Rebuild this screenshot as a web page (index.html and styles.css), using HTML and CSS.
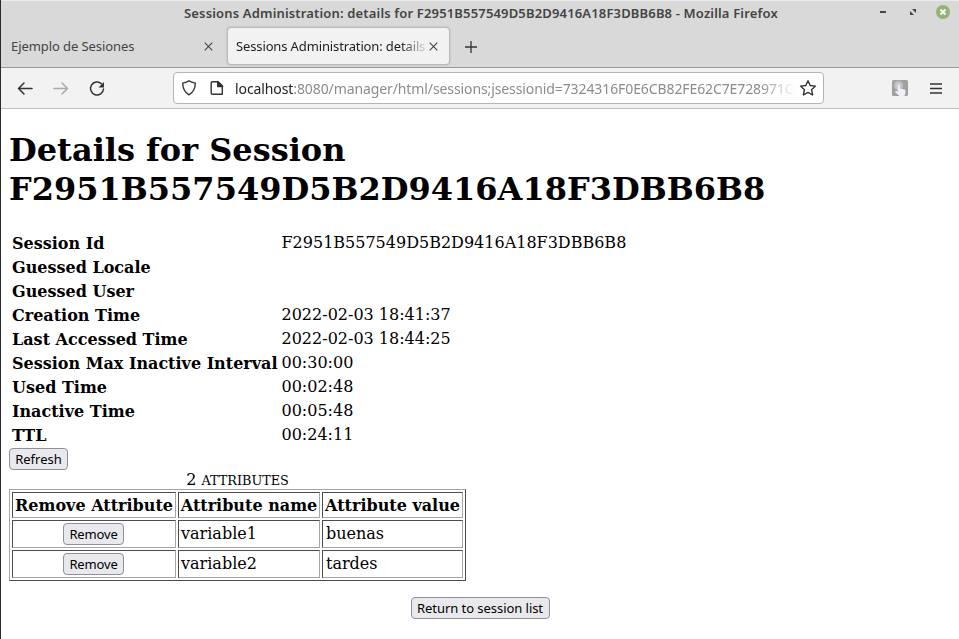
FILE: index.html
```html
<!DOCTYPE html>
<html lang="en">
<head>
<meta charset="utf-8">
<title>Sessions Administration</title>
<link rel="stylesheet" href="styles.css">
</head>
<body>
<div class="window">
  <header class="titlebar">
    <span class="title">Sessions Administration: details for F2951B557549D5B2D9416A18F3DBB6B8 - Mozilla Firefox</span>
    <div class="controls">
      <svg width="84" height="24" viewBox="0 0 84 24">
        <path d="M5 10h6v2H5z" fill="#444"/>
        <path d="M37 8h4v4zM35 10v4h4z" fill="#444"/>
        <circle cx="68" cy="11" r="7" fill="#92b372"/>
        <path d="M65.500 8.500l5 5m0-5l-5 5" stroke="#fff" stroke-width="2"/>
      </svg>
    </div>
  </header>
  <nav class="tabs">
    <div class="tab"><span class="label l1">Ejemplo de Sesiones</span>
      <svg class="close" width="9" height="9" viewBox="0 0 9 9"><path d="M.7.7l7.6 7.6m0-7.6L.7 8.3"/></svg></div>
    <div class="tab active"><span class="label l2">Sessions Administration: details for</span>
      <svg class="close" width="9" height="9" viewBox="0 0 9 9"><path d="M.7.7l7.6 7.6m0-7.6L.7 8.3"/></svg></div>
    <svg class="plus" width="12" height="12" viewBox="0 0 12 12"><path d="M6 0v12M0 6h12"/></svg>
  </nav>
  <div class="toolbar">
    <svg class="nav" width="100" height="40" viewBox="0 0 100 40">
      <path d="M6.500 20.500H20M12 15l-5.500 5.500L12 26" stroke="#333"/>
      <path d="M42 20.500h13.500M50 15l5.500 5.500L50 26" stroke="#aaa"/>
      <path d="M89.500 15.800A6.500 6.500 0 1 0 91.500 21" stroke="#333"/>
      <path d="M92 14v5.500h-5.500z" fill="#333" stroke="none"/>
    </svg>
    <div class="urlbar">
      <svg class="urlicons" width="42" height="18" viewBox="0 0 42 18">
        <path d="M7 1.700C5.500 3 3.200 3.700.7 4.100c0 5.200 1.600 9.100 6.300 11.700 4.700-2.600 6.300-6.500 6.300-11.700C10.800 3.700 8.500 3 7 1.700z"/>
        <path d="M30.200 2.700h5.800l4.300 4.100v8.500H30.200q-1 0-1-1V3.700q0-1 1-1z"/>
        <path d="M35.700 2.500v5h5z" fill="#333"/>
      </svg>
      <span class="url"><b>localhost</b>:8080/manager/html/sessions;jsessionid=7324316F0E6CB82FE62C7E728971CCA2</span>
      <svg class="star" width="18" height="18" viewBox="0 0 18 18"><path d="M9 1.700l2.200 4.800 5.300.6-3.900 3.600 1 5.300L9 13.400 4.400 16l1-5.300-3.900-3.600 5.300-.6z"/></svg>
    </div>
    <svg class="addon" width="16" height="16" viewBox="0 0 16 16">
      <rect width="16" height="16" rx="1.500" fill="#a0a0a0"/>
      <circle cx="6.500" cy="5.500" r="5" fill="#b5b5b5"/><circle cx="6.500" cy="5.500" r="3.500" fill="#c8c8c8"/>
      <path d="M5.800 5q1-1 2 0v3.500l5 1q1 .5.700 3l-1 3.500H7.500L3 12q0-1.500 2.800-.5z" fill="#edf0f8"/>
    </svg>
    <svg class="menu" width="12" height="11" viewBox="0 0 12 11"><path d="M0 1h12M0 5.500h12M0 10h12"/></svg>
  </div>
  <main>
    <h1>Details for Session F2951B557549D5B2D9416A18F3DBB6B8</h1>
    <table class="details">
      <tr><th>Session Id</th><td>F2951B557549D5B2D9416A18F3DBB6B8</td></tr>
      <tr><th>Guessed Locale</th><td></td></tr>
      <tr><th>Guessed User</th><td></td></tr>
      <tr><th>Creation Time</th><td>2022-02-03 18:41:37</td></tr>
      <tr><th>Last Accessed Time</th><td>2022-02-03 18:44:25</td></tr>
      <tr><th>Session Max Inactive Interval</th><td>00:30:00</td></tr>
      <tr><th>Used Time</th><td>00:02:48</td></tr>
      <tr><th>Inactive Time</th><td>00:05:48</td></tr>
      <tr><th>TTL</th><td>00:24:11</td></tr>
    </table>
    <button class="refresh">Refresh</button>
    <table class="attrs">
      <caption>2 <span class="caps">attributes</span></caption>
      <tr><th class="c1">Remove Attribute</th><th class="c2">Attribute name</th><th class="c3">Attribute value</th></tr>
      <tr><td><button class="remove">Remove</button></td><td>variable1</td><td>buenas</td></tr>
      <tr><td><button class="remove">Remove</button></td><td>variable2</td><td>tardes</td></tr>
    </table>
    <button class="return">Return to session list</button>
  </main>
</div>
</body>
</html>
```
FILE: styles.css
```css
* { box-sizing: border-box; }
body { margin: 0; background: #fff; }
svg { display: block; flex: none; }
.window {
  height: 639px;
  overflow: hidden;
  border-left: 1px solid #2b2b2f;
  font-family: "Noto Sans", sans-serif;
}
.titlebar {
  display: flex;
  height: 27px;
  background: #d9d9d9;
  border-top: 1px solid #ececec;
  padding-left: 183px;
}
.title {
  width: 610px;
  font-size: 13px;
  font-weight: 600;
  line-height: 24px;
  color: #444;
  white-space: nowrap;
  letter-spacing: 0.16px;
}
.controls { margin-left: 81px; }
.tabs {
  display: flex;
  height: 41px;
  background: #d9d9d9;
  border-bottom: 1px solid #999;
}
.tab {
  display: flex;
  align-items: center;
  width: 222px;
  height: 38px;
  padding: 0 10px 0 10px;
  font-size: 13px;
  color: #444;
}
.tab.active {
  margin-left: 4px;
  width: 223px;
  padding: 0 11px 0 8px;
  border: 1px solid #b9b9c1;
  border-radius: 4px;
  background: #f2f2f2;
  box-shadow: 0 0 2px #aaaab4;
  color: #222;
}
.label { flex: 1; overflow: hidden; white-space: nowrap; }
.l1 { letter-spacing: -0.08px; }
.l2 {
  letter-spacing: -0.13px;
  -webkit-mask-image: linear-gradient(to left, transparent, #000 28px);
  mask-image: linear-gradient(to left, transparent, #000 28px);
}
.close { fill: none; stroke: #444; stroke-width: 1.1; }
.plus { margin: 14px 0 0 15px; fill: none; stroke: #333; stroke-width: 1.3; }
.toolbar {
  display: flex;
  align-items: center;
  height: 41px;
  background: #f2f2f2;
  border-bottom: 1px solid #bdbdbd;
}
.nav { margin-left: 11px; fill: none; stroke-width: 1.5; stroke-linecap: round; stroke-linejoin: round; }
.urlbar {
  display: flex;
  align-items: center;
  width: 651px;
  height: 32px;
  margin-left: 61px;
  padding-left: 8px;
  border: 1px solid #b5b5b5;
  border-radius: 4px;
  background: #fff;
}
.urlicons, .star { fill: none; stroke: #333; stroke-width: 1.4; stroke-linejoin: round; }
.url {
  width: 561px;
  margin-left: 11px;
  overflow: hidden;
  white-space: nowrap;
  font-size: 14px;
  letter-spacing: -0.1px;
  color: #8c8c8c;
  -webkit-mask-image: linear-gradient(to left, transparent, #000 36px);
  mask-image: linear-gradient(to left, transparent, #000 36px);
}
.url b { font-weight: 400; color: #222; }
.star { margin-left: 3px; }
.addon { margin-left: 68px; }
.menu { margin-left: 22px; fill: none; stroke: #333; stroke-width: 1.4; }
main {
  display: flow-root;
  padding: 0 8px;
  font-family: "DejaVu Serif", serif;
  font-size: 16px;
  color: #000;
}
h1 { width: 800px; margin: 22px 0; font-size: 32px; line-height: 39px; }
table { border-spacing: 2px; }
.details { width: 621px; margin-bottom: -1px; }
.details th, .details td { height: 22px; padding: 1px; line-height: 20px; text-align: left; white-space: nowrap; }
.details th { width: 267px; }
.details td { padding: 0 1px 2px; }
button {
  display: block;
  height: 22px;
  padding: 0;
  border: 1px solid #8f8f9d;
  border-radius: 4px;
  background: #e9e9ed;
  font: 13px/19px "Noto Sans", sans-serif;
  color: #000;
  white-space: nowrap;
}
.refresh { width: 59px; }
.remove { width: 61px; margin: 0 0 0 48px; letter-spacing: -0.15px; }
.return { width: 139px; margin: 16px auto 0; letter-spacing: -0.05px; }
.attrs { width: 457px; table-layout: fixed; border: 1px solid; border-color: #a6a6a6 #4c4c4c #4c4c4c #a6a6a6; }
.attrs caption { height: 19px; line-height: 19px; }
.caps { text-transform: uppercase; font-size: 12.8px; }
.attrs th, .attrs td {
  height: 28px;
  padding: 1px 2px;
  border: 1px solid;
  border-color: #4c4c4c #a6a6a6 #a6a6a6 #4c4c4c;
  line-height: 20px;
  white-space: nowrap;
}
.attrs th { height: 26px; padding: 2px 0 0; }
.attrs td + td { padding-bottom: 1px; }
.attrs td:last-child { padding-left: 3px; }
.c1 { width: 164px; }
.c2 { width: 142px; }
.c3 { width: 141px; }
```
